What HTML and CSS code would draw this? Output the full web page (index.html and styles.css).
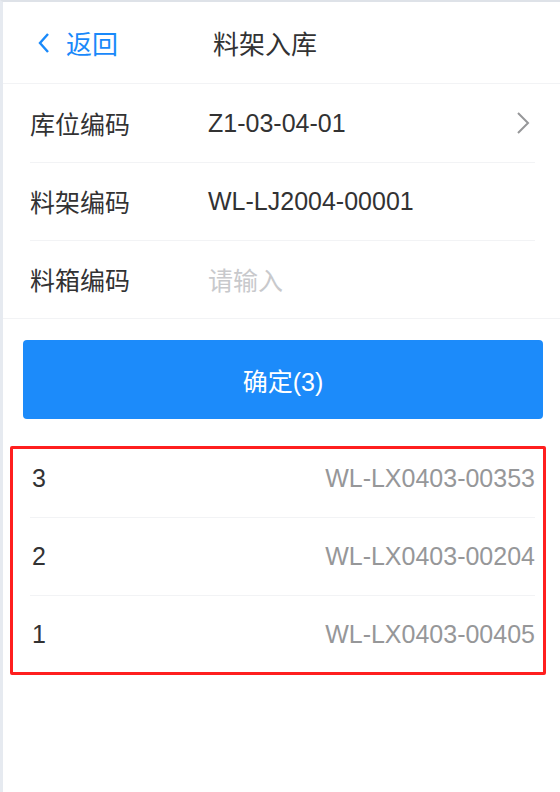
FILE: index.html
```html
<!DOCTYPE html>
<html lang="zh-CN">
<head>
    <meta charset="UTF-8">
    <title>料架入库</title>
    <link rel="stylesheet" href="styles.css">
</head>
<body>
<div class="page">
    <div class="nav">
        <a class="nav-back" href="javascript:;">
            <svg width="14" height="22" viewBox="0 0 14 22"><path d="M11 2 L3 11 L11 20" fill="none" stroke="#1989fa" stroke-width="2.4"/></svg>
            <span>返回</span>
        </a>
        <div class="nav-title">料架入库</div>
    </div>

    <div class="form">
        <div class="cell">
            <span class="label">库位编码</span>
            <span class="value">Z1-03-04-01</span>
            <svg class="arrow" width="26" height="26" viewBox="0 0 26 26"><path d="M9 3 L19 13 L9 23" fill="none" stroke="#969799" stroke-width="2"/></svg>
        </div>
        <div class="cell">
            <span class="label">料架编码</span>
            <span class="value">WL-LJ2004-00001</span>
        </div>
        <div class="cell">
            <span class="label">料箱编码</span>
            <span class="value placeholder">请输入</span>
        </div>
    </div>

    <div class="btn-wrap">
        <button class="btn">确定(3)</button>
    </div>

    <div class="list">
        <div class="row"><span class="num">3</span><span class="code">WL-LX0403-00353</span></div>
        <div class="row"><span class="num">2</span><span class="code">WL-LX0403-00204</span></div>
        <div class="row"><span class="num">1</span><span class="code">WL-LX0403-00405</span></div>
        <div class="mark"></div>
    </div>
</div>
</body>
</html>
```

FILE: styles.css
```css
* {
    margin: 0;
    padding: 0;
    box-sizing: border-box;
}

body {
    font-family: "Liberation Sans", "Noto Sans CJK SC", sans-serif;
    font-size: 25px;
    color: #323233;
    background: #fff;
}

.page {
    min-height: 100vh;
    border-left: 3px solid #e6eaf0;
    border-top: 2px solid #dee2e8;
    background: #fff;
}

/* 顶部导航 */
.nav {
    height: 82px;
    display: flex;
    align-items: center;
    border-bottom: 1px solid #f2f3f5;
}

.nav-back {
    display: flex;
    align-items: center;
    margin-left: 34px;
    color: #1989fa;
    text-decoration: none;
    font-size: 26px;
}

.nav-back svg {
    margin-right: 15px;
}

.nav-title {
    margin-left: 95px;
    font-size: 26px;
    color: #323233;
}

/* 表单 */
.form {
    border-bottom: 1px solid #f2f3f5;
}

.cell {
    position: relative;
    height: 78px;
    display: flex;
    align-items: center;
    padding: 0 25px 0 27px;
}

.cell + .cell:before,
.row + .row:before {
    content: "";
    position: absolute;
    left: 27px;
    right: 25px;
    top: 0;
    border-top: 1px solid #f2f3f5;
}

.label {
    width: 178px;
    flex-shrink: 0;
}

.value {
    flex: 1;
}

.placeholder {
    color: #c8c9cc;
}

.arrow {
    flex-shrink: 0;
}

/* 按钮 */
.btn-wrap {
    padding: 21px 17px 20px 20px;
}

.btn {
    display: block;
    width: 100%;
    height: 79px;
    border: none;
    border-radius: 4px;
    background: #1c8bfa;
    color: #fff;
    font-family: inherit;
    font-size: 25px;
}

/* 列表 */
.list {
    position: relative;
}

.row {
    position: relative;
    height: 78px;
    display: flex;
    align-items: center;
    justify-content: space-between;
    padding: 0 25px 0 27px;
}

.num {
    padding-left: 2px;
}

.code {
    color: #969799;
}

.mark {
    position: absolute;
    left: 7px;
    top: 7px;
    width: 536px;
    height: 229px;
    border: 3px solid #ff1f1f;
    border-radius: 2px;
}
```
